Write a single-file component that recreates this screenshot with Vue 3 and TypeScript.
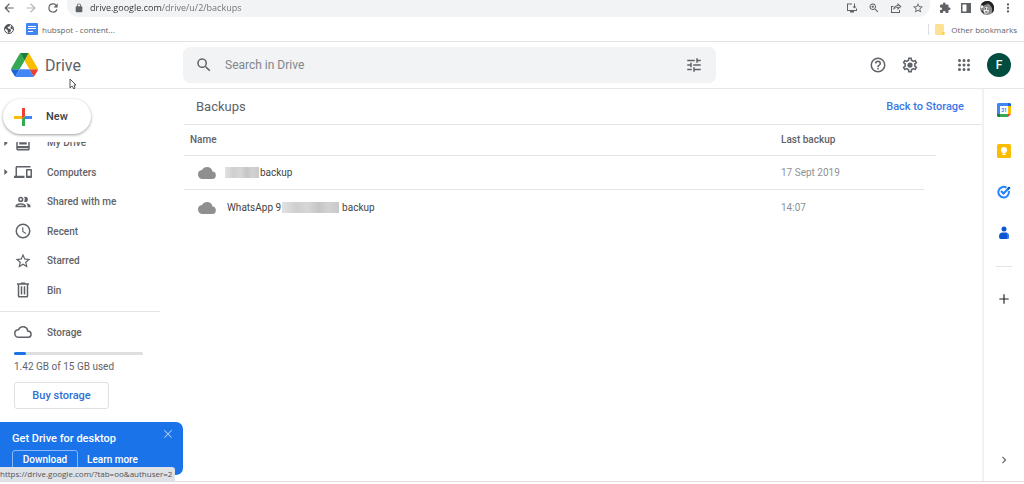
<script setup lang="ts">
import { ref } from 'vue'

const address = ref('drive.google.com/drive/u/2/backups')
const query = ref('')

const icons: Record<string, string> = {
  back: 'M20 11H7.83l5.59-5.59L12 4l-8 8 8 8 1.41-1.41L7.83 13H20v-2z',
  forward: 'M12 4l-1.41 1.41L16.17 11H4v2h12.17l-5.58 5.59L12 20l8-8z',
  reload: 'M17.65 6.35A7.96 7.96 0 0 0 12 4a8 8 0 1 0 7.73 10h-2.08A6 6 0 1 1 12 6c1.66 0 3.14.69 4.22 1.78L13 11h7V4l-2.35 2.35z',
  lock: 'M18 8h-1V6A5 5 0 0 0 7 6v2H6a2 2 0 0 0-2 2v10c0 1.1.9 2 2 2h12a2 2 0 0 0 2-2V10a2 2 0 0 0-2-2zM9 6a3 3 0 0 1 6 0v2H9V6z',
  install: 'M2 3h10v2H4v11h16v-3h2v5h-6v3H8v-3H2zM16 3h2v6h3l-4 4-4-4h3z',
  zoom: 'M15.5 14h-.79l-.28-.27A6.5 6.5 0 1 0 13.73 14.43l.27.28v.79l5 4.99L20.49 19l-4.99-5zm-6 0a4.5 4.5 0 1 1 0-9 4.5 4.5 0 0 1 0 9zM10.300 7H8.700v1.700H7v1.600h1.700V12h1.600v-1.700H12V8.700h-1.700z',
  share: 'M2 8h5v2H4v10h14v-4h2v6H2zM15 2l8 7-8 7v-4c-4 0-6 1-9 4 1-5 3-9 9-10zM17 6.500V8c-4 .2-6 1.500-7.500 3.500C11.500 10.500 14 10 17 10v1.500L20 9z',
  star: 'M22 9.240l-7.190-.62L12 2 9.190 8.630 2 9.240l5.460 4.730L5.820 21 12 17.270 18.180 21l-1.630-7.030L22 9.240zM12 15.400l-3.760 2.270 1-4.280-3.320-2.880 4.380-.38L12 6.100l1.710 4.040 4.380.38-3.320 2.880 1 4.280L12 15.400z',
  puzzle: 'M20.500 11H19V7a2 2 0 0 0-2-2h-4V3.500a2.500 2.500 0 0 0-5 0V5H4a2 2 0 0 0-2 2v3.800h1.500a2.700 2.700 0 0 1 0 5.400H2V20c0 1.100.9 2 2 2h3.800v-1.500a2.700 2.700 0 0 1 5.400 0V22H17a2 2 0 0 0 2-2v-4h1.500a2.500 2.500 0 0 0 0-5z',
  panel: 'M2 2h20v20H2zM5 5v14h8V5z',
  more: 'M12 8a2 2 0 1 0 0-4 2 2 0 0 0 0 4zm0 2a2 2 0 1 0 0 4 2 2 0 0 0 0-4zm0 6a2 2 0 1 0 0 4 2 2 0 0 0 0-4z',
  search: 'M15.500 14h-.79l-.28-.27A6.500 6.500 0 1 0 13.730 14.430l.27.28v.79l5 4.990L20.490 19l-4.990-5zm-6 0a4.500 4.500 0 1 1 0-9 4.500 4.500 0 0 1 0 9z',
  tune: 'M3 17v2h6v-2H3zM3 5v2h10V5H3zm10 16v-2h8v-2h-8v-2h-2v6h2zM7 9v2H3v2h4v2h2V9H7zm14 4v-2H11v2h10zm-6-4h2V7h4V5h-4V3h-2v6z',
  help: 'M11 18h2v-2h-2v2zm1-16a10 10 0 1 0 0 20 10 10 0 0 0 0-20zm0 18a8 8 0 1 1 0-16 8 8 0 0 1 0 16zm0-14a4 4 0 0 0-4 4h2a2 2 0 1 1 4 0c0 2-3 1.750-3 5h2c0-2.250 3-2.500 3-5a4 4 0 0 0-4-4z',
  settings: 'M19.43 12.98c.04-.32.07-.64.07-.98 0-.34-.03-.66-.07-.98l2.11-1.65c.19-.15.24-.42.12-.64l-2-3.46c-.09-.16-.26-.25-.44-.25-.06 0-.12.01-.17.03l-2.49 1c-.52-.4-1.08-.73-1.69-.98l-.38-2.65C14.46 2.18 14.25 2 14 2h-4c-.25 0-.46.18-.49.42l-.38 2.65c-.61.25-1.17.59-1.69.98l-2.49-1c-.06-.02-.12-.03-.18-.03-.17 0-.34.09-.43.25l-2 3.46c-.13.22-.07.49.12.64l2.11 1.65c-.04.32-.07.65-.07.98 0 .33.03.66.07.98l-2.11 1.65c-.19.15-.24.42-.12.64l2 3.46c.09.16.26.25.44.25.06 0 .12-.01.17-.03l2.49-1c.52.4 1.08.73 1.69.98l.38 2.65c.03.24.24.42.49.42h4c.25 0 .46-.18.49-.42l.38-2.65c.61-.25 1.17-.59 1.69-.98l2.49 1c.06.02.12.03.18.03.17 0 .34-.09.43-.25l2-3.46c.12-.22.07-.49-.12-.64l-2.11-1.65zm-1.98-1.71c.04.31.05.52.05.73 0 .21-.02.43-.05.73l-.14 1.13.89.7 1.08.84-.7 1.21-1.27-.51-1.04-.42-.9.68c-.43.32-.84.56-1.25.73l-1.06.43-.16 1.13-.2 1.35h-1.4l-.19-1.35-.16-1.13-1.06-.43c-.43-.18-.83-.41-1.23-.71l-.91-.7-1.06.43-1.27.51-.7-1.21 1.08-.84.89-.7-.14-1.13c-.03-.31-.05-.54-.05-.74s.02-.43.05-.73l.14-1.13-.89-.7-1.08-.84.7-1.21 1.27.51 1.04.42.9-.68c.43-.32.84-.56 1.25-.73l1.06-.43.16-1.13.2-1.35h1.39l.19 1.35.16 1.13 1.06.43c.43.18.83.41 1.23.71l.91.7 1.06-.43 1.27-.51.7 1.21-1.07.85-.89.7.14 1.13zM12 8.500a3.500 3.500 0 1 0 0 7 3.500 3.500 0 0 0 0-7z',
  apps: 'M6 8a2 2 0 1 0 0-4 2 2 0 0 0 0 4zm6 0a2 2 0 1 0 0-4 2 2 0 0 0 0 4zm6 0a2 2 0 1 0 0-4 2 2 0 0 0 0 4zM6 14a2 2 0 1 0 0-4 2 2 0 0 0 0 4zm6 0a2 2 0 1 0 0-4 2 2 0 0 0 0 4zm6 0a2 2 0 1 0 0-4 2 2 0 0 0 0 4zM6 20a2 2 0 1 0 0-4 2 2 0 0 0 0 4zm6 0a2 2 0 1 0 0-4 2 2 0 0 0 0 4zm6 0a2 2 0 1 0 0-4 2 2 0 0 0 0 4z',
  drive: 'M19 3H5a2 2 0 0 0-2 2v15c0 1.100.9 2 2 2h14c1.100 0 2-.9 2-2V5a2 2 0 0 0-2-2zm0 17H5v-1h14v1zm0-4H5V5h14v11zM7 11h10v3H7z',
  computers: 'M4 6h18V4H4c-1.100 0-2 .9-2 2v11H0v3h14v-3H4V6zm19 2h-6c-.55 0-1 .45-1 1v10c0 .55.45 1 1 1h6c.55 0 1-.45 1-1V9c0-.55-.45-1-1-1zm-1 9h-4v-7h4v7z',
  people: 'M9 13.750c-2.340 0-7 1.170-7 3.500V19h14v-1.750c0-2.330-4.660-3.500-7-3.500zM4.340 17c.84-.58 2.870-1.250 4.660-1.250s3.820.67 4.660 1.250H4.340zM9 12a3.500 3.500 0 1 0 0-7 3.500 3.500 0 0 0 0 7zm0-5a1.500 1.500 0 1 1 0 3 1.500 1.500 0 0 1 0-3zm7.040 6.810c1.160.84 1.960 1.960 1.960 3.440V19h4v-1.750c0-2.020-3.500-3.170-5.960-3.440zM15 12a3.500 3.500 0 1 0 0-7c-.54 0-1.040.13-1.500.35a5.450 5.450 0 0 1 0 6.300c.46.22.96.35 1.500.35z',
  recent: 'M12 2a10 10 0 1 0 0 20 10 10 0 0 0 0-20zm0 18a8 8 0 1 1 0-16 8 8 0 0 1 0 16zm.5-13H11v6l4.500 3 .8-1.250-3.800-2.550z',
  bin: 'M15 3V2H9v1H4v2h1v15c0 1.100.9 2 2 2h10a2 2 0 0 0 2-2V5h1V3h-5zm2 17H7V5h10v15zM9 7h2v11H9zm4 0h2v11h-2z',
  cloudOutline: 'M19.350 10.040A7.490 7.490 0 0 0 12 4C9.110 4 6.600 5.640 5.350 8.040A5.994 5.994 0 0 0 0 14c0 3.310 2.690 6 6 6h13a5 5 0 0 0 .35-9.960zM19 18H6a4 4 0 0 1-.44-7.970l1.070-.11.5-.95a5.500 5.500 0 0 1 10.260 1.460l.3 1.500 1.530.11A3 3 0 0 1 19 18z',
  cloud: 'M19.350 10.040A7.490 7.490 0 0 0 12 4C9.110 4 6.600 5.640 5.350 8.040A5.994 5.994 0 0 0 0 14c0 3.310 2.690 6 6 6h13a5 5 0 0 0 .35-9.960z',
  close: 'M19 6.200L17.800 5 12 10.800 6.200 5 5 6.200l5.800 5.800L5 17.800 6.200 19l5.800-5.800 5.800 5.800 1.200-1.200-5.800-5.800z',
  add: 'M20 13h-7v7h-2v-7H4v-2h7V4h2v7h7z',
  chevron: 'M10 6L8.590 7.410 13.170 12l-4.580 4.590L10 18l6-6z',
  arrow: 'M7 3l10 9-10 9z',
}

const browserNav = [
  { icon: 'back', label: 'Back' },
  { icon: 'forward', label: 'Forward', muted: true },
  { icon: 'reload', label: 'Reload' },
]
const pageActions = [
  { icon: 'install', label: 'Install app' },
  { icon: 'zoom', label: 'Zoom' },
  { icon: 'share', label: 'Share page' },
  { icon: 'star', label: 'Bookmark page' },
]
const places = [
  { icon: 'drive', label: 'My Drive', expandable: true },
  { icon: 'computers', label: 'Computers', expandable: true },
  { icon: 'people', label: 'Shared with me', expandable: false },
  { icon: 'recent', label: 'Recent', expandable: false },
  { icon: 'star', label: 'Starred', expandable: false },
  { icon: 'bin', label: 'Bin', expandable: false },
]
const backups = [
  { before: '', size: 'short', after: 'backup', date: '17 Sept 2019' },
  { before: 'WhatsApp 9', size: 'long', after: 'backup', date: '14:07' },
]
const storage = { used: 1.42, total: 15 }
</script>

<template>
  <div class="window">
    <div class="toolbar">
      <button v-for="b in browserNav" :key="b.icon" type="button" :aria-label="b.label" :class="{ muted: b.muted }">
        <svg class="i16" viewBox="0 0 24 24"><path :d="icons[b.icon]" /></svg>
      </button>
      <div class="omnibox">
        <svg class="i10" viewBox="0 0 24 24"><path :d="icons.lock" /></svg>
        <input v-model="address" type="text" aria-label="Address" />
        <button v-for="b in pageActions" :key="b.icon" type="button" :aria-label="b.label">
          <svg class="i12" viewBox="0 0 24 24"><path :d="icons[b.icon]" fill-rule="evenodd" /></svg>
        </button>
      </div>
      <div class="extensions">
        <button type="button" aria-label="Extensions"><svg class="i12" viewBox="0 0 24 24"><path :d="icons.puzzle" /></svg></button>
        <button type="button" aria-label="Side panel"><svg class="i12" viewBox="0 0 24 24"><path :d="icons.panel" fill-rule="evenodd" /></svg></button>
        <button type="button" aria-label="Profile">
          <svg class="i14" viewBox="0 0 28 28">
            <circle cx="14" cy="14" r="14" fill="#8b8b8b" />
            <path d="M14 0a14 14 0 0 1 9 25c3-8 1-14-4-17-5-3-9-1-12 2L2 7A14 14 0 0 1 14 0z" fill="#222" />
            <path d="M1 10l5-1 1 4-5 2zM8 16c1-4 8-5 10 0l-1 7-5 3-5-4z" fill="#eee" />
            <path d="M9 15l3-1v3H9zM14 15h3v3l-3-1zM10 21h5v2h-4zM3 18l4 3 1 5-5-5z" fill="#333" />
            <path d="M13 5l5 1 4 6-5-4z" fill="#999" />
          </svg>
        </button>
        <button type="button" aria-label="Browser menu"><svg class="i14" viewBox="0 0 24 24"><path :d="icons.more" /></svg></button>
      </div>
    </div>

    <div class="bookmarks">
      <a href="#" aria-label="Web page">
        <svg class="i10" viewBox="0 0 20 20">
          <circle cx="10" cy="10" r="9" fill="#fff" stroke="#505357" stroke-width="2" />
          <path d="M2 6l4-4 6-1-1 4-4 1 1 3 5 1 1 4-4 4-2-1-1-5-5-3zM14 3l4 5-1 3-4-2z" fill="#505357" />
        </svg>
      </a>
      <a href="#">
        <svg class="i12" viewBox="0 0 12 12"><rect width="12" height="12" rx="1" fill="#4285f4" /><path d="M2 3h8v1H2zM2 5h8v1H2zM2 8h5v1H2z" fill="#fff" /></svg>
        hubspot - content...
      </a>
      <a href="#" class="other">
        <svg class="folder" viewBox="0 0 10 11"><path d="M1 0h7l1 1v7l1 1-1 2H1L0 10V1z" fill="#fde293" /><path d="M7 8h2l1 1-1 2H7z" fill="#fbd45c" /></svg>
        Other bookmarks
      </a>
    </div>

    <header class="header">
      <a href="#" class="brand">
        <svg class="logo" viewBox="0 0 87.300 78">
          <path d="m6.600 66.850 3.850 6.650c.8 1.400 1.950 2.500 3.300 3.300l13.750-23.800h-27.500c0 1.550.4 3.100 1.200 4.500z" fill="#1967d2" />
          <path d="m43.650 25-13.750-23.800c-1.350.8-2.500 1.900-3.300 3.300l-25.400 44a9.060 9.060 0 0 0-1.200 4.500h27.500z" fill="#34a853" />
          <path d="m73.550 76.800c1.350-.8 2.500-1.900 3.300-3.300l1.600-2.750 7.650-13.250c.8-1.400 1.200-2.950 1.200-4.500h-27.500l5.850 11.500z" fill="#ea4335" />
          <path d="m43.650 25 13.750-23.800c-1.350-.8-2.900-1.200-4.500-1.200h-18.500c-1.600 0-3.150.45-4.500 1.200z" fill="#188038" />
          <path d="m59.800 53h-32.300l-13.750 23.800c1.350.8 2.900 1.200 4.500 1.200h50.800c1.600 0 3.150-.45 4.500-1.200z" fill="#4285f4" />
          <path d="m73.400 26.500-12.700-22c-.8-1.400-1.950-2.500-3.300-3.300l-13.750 23.800 16.150 28h27.450c0-1.550-.4-3.100-1.200-4.500z" fill="#fbbc04" />
        </svg>
        Drive
      </a>
      <form class="search" role="search" @submit.prevent>
        <button type="submit" aria-label="Search"><svg class="i18" viewBox="0 0 24 24"><path :d="icons.search" /></svg></button>
        <input v-model="query" type="text" placeholder="Search in Drive" aria-label="Search in Drive" />
        <button type="button" aria-label="Advanced search"><svg class="i18" viewBox="0 0 24 24"><path :d="icons.tune" /></svg></button>
      </form>
      <div class="account">
        <button type="button" aria-label="Support"><svg class="i18" viewBox="0 0 24 24"><path :d="icons.help" /></svg></button>
        <button type="button" aria-label="Settings"><svg class="i18" viewBox="0 0 24 24"><path :d="icons.settings" /></svg></button>
        <button type="button" aria-label="Google apps" class="apps"><svg class="i18" viewBox="0 0 24 24"><path :d="icons.apps" /></svg></button>
        <button type="button" class="avatar" aria-label="Account">F</button>
      </div>
    </header>

    <div class="body">
      <aside class="sidebar">
        <button type="button" class="new">
          <svg class="i18" viewBox="0 0 18 18">
            <path d="M8 0h3v8H8z" fill="#ea4335" /><path d="M0 8h8v3H0z" fill="#fbbc04" /><path d="M8 11h3v7H8z" fill="#34a853" /><path d="M11 8h7v3h-7z" fill="#4285f4" /><path d="M8 8h3L8 11z" fill="#ea4335" /><path d="M11 8v3H8z" fill="#34a853" />
          </svg>
          New
        </button>
        <nav class="places">
          <ul>
            <li v-for="p in places" :key="p.label">
              <a href="#">
                <span class="expander"><svg v-if="p.expandable" class="i8" viewBox="0 0 24 24"><path :d="icons.arrow" /></svg></span>
                <svg class="i18" viewBox="0 0 24 24"><path :d="icons[p.icon]" /></svg>
                {{ p.label }}
              </a>
            </li>
          </ul>
        </nav>
        <section class="storage">
          <a href="#"><svg class="i18" viewBox="0 0 24 24"><path :d="icons.cloudOutline" /></svg>Storage</a>
          <div class="meter"><div class="fill" :style="{ width: (storage.used / storage.total) * 100 + '%' }"></div></div>
          <p>{{ storage.used }} GB of {{ storage.total }} GB used</p>
          <button type="button">Buy storage</button>
        </section>
        <section class="promo">
          <div class="promo-head">
            <h2>Get Drive for desktop</h2>
            <button type="button" aria-label="Dismiss"><svg class="i14" viewBox="0 0 24 24"><path :d="icons.close" /></svg></button>
          </div>
          <div class="promo-actions">
            <button type="button" class="download">Download</button>
            <a href="#">Learn more</a>
          </div>
        </section>
      </aside>

      <main class="main">
        <div class="title">
          <h1>Backups</h1>
          <a href="#">Back to Storage</a>
        </div>
        <table>
          <thead>
            <tr><th scope="col">Name</th><th scope="col" class="date">Last backup</th></tr>
          </thead>
          <tbody>
            <tr v-for="b in backups" :key="b.date">
              <td>
                <div class="file">
                  <svg class="i18" viewBox="0 0 24 24"><path :d="icons.cloud" /></svg>
                  <span v-if="b.before" class="before">{{ b.before }}</span>
                  <span class="redacted" :class="b.size"></span>
                  <span>{{ b.after }}</span>
                </div>
              </td>
              <td class="date">{{ b.date }}</td>
            </tr>
          </tbody>
        </table>
      </main>

      <aside class="rail">
        <button type="button" aria-label="Calendar">
          <svg class="i14" viewBox="0 0 28 28">
            <path d="M2 0h20v6H6v16H0V2z" fill="#4285f4" /><path d="M22 0h4l2 2v4h-6z" fill="#1967d2" /><path d="M22 6h6v16h-6z" fill="#fbbc04" /><path d="M6 22h16v6H6z" fill="#34a853" /><path d="M0 22h6v6H2l-2-2z" fill="#188038" /><path d="M22 22h6l-6 6z" fill="#ea4335" /><path d="M6 6h16v16H6z" fill="#fff" />
            <text x="14" y="18" text-anchor="middle" class="day">31</text>
          </svg>
        </button>
        <button type="button" aria-label="Keep">
          <svg class="i14" viewBox="0 0 28 28"><rect width="28" height="28" rx="3" fill="#fbbc04" /><circle cx="14" cy="12" r="6" fill="#fff" /><path d="M11 16h6v3h-6zM11 20h6v2h-6z" fill="#fff" /></svg>
        </button>
        <button type="button" aria-label="Tasks">
          <svg class="i14 tasks" viewBox="0 0 28 28"><path d="M19 5.500A10.500 10.500 0 1 0 23.500 12" stroke="#2684fc" stroke-width="4" /><path d="M8 12l5 5L25 5" stroke="#2684fc" stroke-width="4.500" /><path d="M20 7l4-4 3 3-4 4z" fill="#0057cc" /></svg>
        </button>
        <button type="button" aria-label="Contacts">
          <svg class="i14" viewBox="0 0 28 28"><circle cx="14" cy="6" r="5" fill="#0b57d0" /><path d="M4 21c0-5 3-8 7-8h6c4 0 7 3 7 8 0 3-1 5-3 5H7c-2 0-3-2-3-5z" fill="#0b57d0" /><path d="M17 13c4 0 7 3 7 8 0 3-1 5-3 5h-2c3-4 3-10-2-13z" fill="#4285f4" /></svg>
        </button>
        <hr />
        <button type="button" aria-label="Get add-ons" class="addons"><svg class="i16" viewBox="0 0 24 24"><path :d="icons.add" /></svg></button>
        <button type="button" aria-label="Hide side panel" class="collapse"><svg class="i14" viewBox="0 0 24 24"><path :d="icons.chevron" /></svg></button>
      </aside>
    </div>

    <div class="status"><span>https://drive.google.com/?tab=oo&amp;authuser=2</span></div>
    <svg class="pointer" viewBox="0 0 8 12"><path d="M1 1v9l2-2 2 3 1-1-1-3h2z" fill="#fff" stroke="#555" stroke-width="1" /></svg>
  </div>
</template>

<style>
html, body { background: #fff; }
</style>

<style scoped>
.window {
  position: relative;
  display: flex;
  flex-direction: column;
  min-height: 100vh;
  box-sizing: border-box;
  padding-bottom: 2px;
  overflow: hidden;
  font-family: Roboto, "Liberation Sans", sans-serif;
  font-size: 10px;
  color: #5f6368;
}
.window * { box-sizing: border-box; }
button, input { padding: 0; border: 0; background: none; font: inherit; color: inherit; outline: none; }
button { display: inline-flex; align-items: center; justify-content: center; cursor: pointer; }
a { color: inherit; text-decoration: none; }
h1, h2, p, ul { margin: 0; padding: 0; list-style: none; }
svg { display: block; flex: none; fill: currentColor; }
.tasks { fill: none; }
.i8 { width: 8px; height: 8px; }
.i10 { width: 10px; height: 10px; }
.i12 { width: 12px; height: 12px; }
.i14 { width: 14px; height: 14px; }
.i16 { width: 14px; height: 14px; margin: 0 1px; }
.i18 { width: 18px; height: 18px; }

.toolbar { display: flex; gap: 6px; height: 17px; padding: 0 9px 0 1px; }
.toolbar > button { height: 15px; }
.muted { color: #b5b8bb; }
.omnibox {
  display: flex;
  align-items: center;
  flex: 1;
  gap: 10px;
  padding: 0 6px 2px 7px;
  border-radius: 0 0 12px 12px;
  background: #f1f3f4;
}
.omnibox input {
  flex: 1;
  min-width: 0;
  height: 15px;
  margin-left: -4px;
  font: 9px "Open Sans", "Noto Sans", sans-serif;
  color: transparent;
  background: linear-gradient(90deg, #303236 72px, #6b6f73 72px);
  background-clip: text;
}
.extensions { display: flex; gap: 7px; margin-left: 2px; height: 15px; }
.extensions button { width: 14px; }

.bookmarks {
  display: flex;
  align-items: center;
  gap: 12px;
  height: 25px;
  padding: 0 7px 0 4px;
  border-bottom: 1px solid #e1e2e4;
  font: 8px "Open Sans", "Noto Sans", sans-serif;
}
.bookmarks a { display: flex; align-items: center; gap: 4px; }
.bookmarks .other { gap: 6px; margin-left: auto; padding-left: 6px; border-left: 1px solid #dcdee0; }
.folder { width: 10px; height: 11px; }

.header { display: flex; align-items: center; height: 47px; border-bottom: 1px solid #e6e7e8; }
.brand { display: flex; align-items: center; gap: 7px; width: 183px; padding-left: 11px; font-size: 16px; }
.logo { width: 27px; height: 24px; }
.search {
  display: flex;
  align-items: center;
  flex: 0 1 533px;
  gap: 12px;
  height: 36px;
  padding: 0 13px 0 12px;
  border-radius: 7px;
  background: #f1f3f4;
}
.search input { flex: 1; min-width: 0; font-size: 12px; }
.search input::placeholder { color: #80868b; opacity: 1; }
.account { display: flex; align-items: center; gap: 14px; margin-left: auto; padding-right: 13px; }
.apps { margin-left: 22px; }
.avatar { width: 24px; height: 24px; border-radius: 50%; background: #004d40; color: #fff; font-size: 12px; font-weight: 500; }

.body { display: flex; flex: 1; border-bottom: 1px solid #e0e0e0; }
.sidebar { display: flex; flex-direction: column; width: 184px; padding-top: 10px; font-weight: 500; }
.new {
  align-self: flex-start;
  justify-content: flex-start;
  gap: 14px;
  width: 88px;
  height: 35px;
  margin-left: 3px;
  padding-left: 11px;
  border-radius: 18px;
  box-shadow: 0 1px 3px #9a9da1;
  font-size: 11px;
  color: #3c4043;
}
.places { margin-top: 8px; overflow: hidden; }
.places ul { display: grid; grid-auto-rows: 1fr; height: 177px; margin-top: -14px; }
.places a { display: flex; align-items: center; height: 100%; }
.places svg.i18, .storage svg { margin-right: 15px; }
.expander { width: 14px; padding-left: 2px; }
.storage { width: 160px; margin-top: 6px; padding: 11px 0 0 14px; border-top: 1px solid #e3e4e5; }
.storage a { display: flex; align-items: center; height: 18px; }
.meter { width: 129px; height: 3px; margin-top: 11px; border-radius: 2px; background: #dcdee0; }
.fill { height: 100%; border-radius: 2px; background: #1a73e8; }
.storage p { margin-top: 5px; line-height: 14px; font-weight: 400; }
.storage button {
  width: 95px;
  height: 27px;
  margin-top: 8px;
  border: 1px solid #dfe1e5;
  border-radius: 3px;
  font-size: 11px;
  color: #2f6fd8;
}
.promo { height: 53px; margin: 13px 1px 0 0; padding: 5px 8px 0 12px; border-radius: 0 7px 7px 0; background: #1a73e8; color: #fff; overflow: hidden; }
.promo-head { display: flex; justify-content: space-between; height: 23px; }
.promo h2 { line-height: 23px; font-size: 11px; font-weight: 500; }
.promo-head button { height: 14px; color: #a9c9f7; }
.promo-actions { display: flex; gap: 9px; align-items: flex-start; }
.promo-actions a { line-height: 19px; }
.download { width: 66px; height: 24px; padding-bottom: 5px; border: 1px solid #8ab8f5; border-radius: 3px; }

.main { flex: 1; min-width: 0; }
.title { display: flex; align-items: center; justify-content: space-between; height: 36px; padding: 0 18px 0 12px; border-bottom: 1px solid #e3e4e5; }
.title h1 { font-size: 13px; font-weight: 400; }
.title a { font-size: 11px; font-weight: 500; color: #3b78e7; }
table { width: calc(100% - 46px); border-collapse: collapse; table-layout: fixed; }
th, td { padding: 0; text-align: left; }
th { height: 30px; padding-left: 6px; border-bottom: 1px solid #e3e4e5; font-weight: 500; }
td { height: 35px; }
th.date, td.date { width: 155px; padding-left: 0; }
td.date { color: #8d9195; }
tbody tr:first-child { background: linear-gradient(#e3e4e5, #e3e4e5) 0 100% / calc(100% - 12px) 1px no-repeat; }
.file { display: flex; align-items: center; gap: 1px; padding-left: 14px; color: #444; }
.file svg { margin-right: 8px; color: #8f8f8f; }
.before { margin-left: 2px; }
.redacted { height: 11px; background: linear-gradient(90deg, #e2e2e2, #cfcfcf 25%, #d6d6d6 45%, #c5c5c5 65%, #d2d2d2 80%, #c9c9c9); }
.short { width: 34px; }
.long { width: 57px; margin-right: 2px; }

.rail { display: flex; flex-direction: column; align-items: center; gap: 27px; width: 42px; padding-top: 14px; border-left: 2px solid #f1f1f1; }
.rail hr { width: 16px; height: 1px; margin: -1px 0 0; border: 0; background: #e3e4e5; }
.day { font: 700 10px Roboto, sans-serif; fill: #4285f4; }
.addons { margin-top: -2px; color: #222; }
.collapse { margin-top: auto; margin-bottom: 14px; }

.status {
  position: absolute;
  left: 0;
  bottom: 2px;
  display: flex;
  height: 15px;
  padding: 0 3px 0 0;
  border-radius: 0 3px 0 0;
  background: #dee1e6;
  font: 8px/14px "Open Sans", "Noto Sans", sans-serif;
  color: #505357;
}
.pointer { position: absolute; left: 69px; top: 78px; width: 8px; height: 12px; }
</style>
